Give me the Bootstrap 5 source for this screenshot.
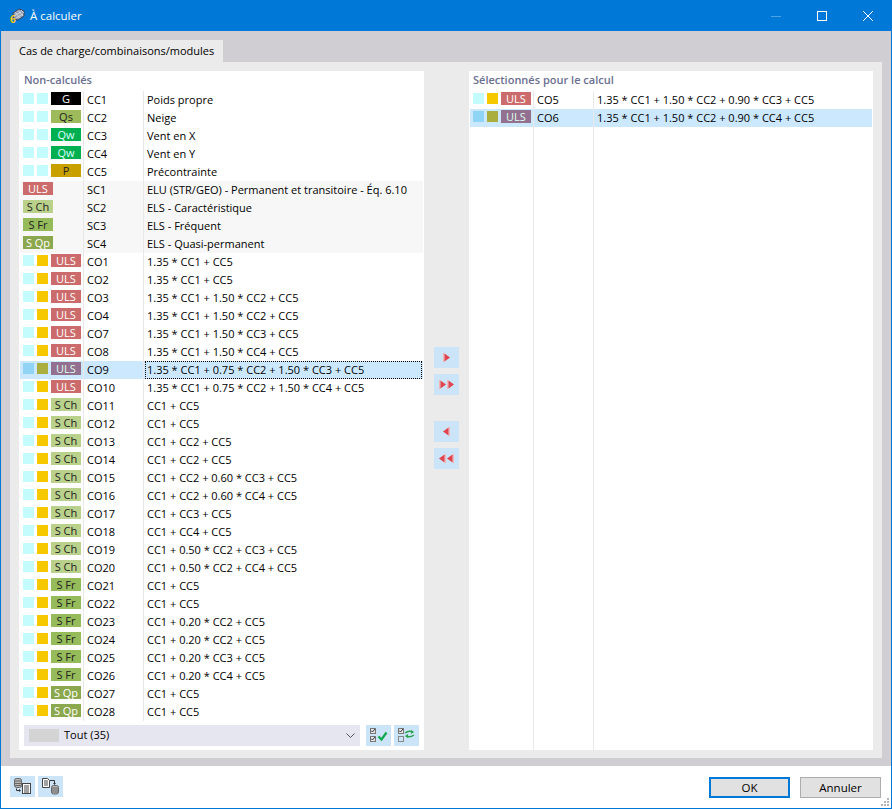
<!doctype html>
<html lang="fr">
  <head>
    <meta charset="UTF-8" />
    <title>À calculer</title>
    <link rel="stylesheet" href="https://cdn.jsdelivr.net/npm/bootstrap@5.3.3/dist/css/bootstrap.min.css" />
    <style>
      html, body { height: 809px; overflow: hidden; }
      body { font-family: "Open Sans", "Noto Sans", sans-serif; font-size: 11px; color: #000; background: #fff; }
      .fenetre { width: 892px; height: 809px; border: 1px solid #0078d7; border-top: 0; }
      .titre { height: 31px; background: #0078d7; color: #fff; font-size: 11.5px; padding-left: 8px; }
      .titre span { margin-left: 5px; }
      .titre-ico { overflow: visible; }
      .ctrl { width: 46px; height: 31px; }
      .milieu { height: 735px; background: #d0ced3; padding: 9px 9px 8px 9px; }
      .onglet { width: 213px; height: 22px; background: #ebebeb; padding: 3px 9px; white-space: nowrap; }
      .panneau { height: 696px; background: #ebebeb; padding: 9px; }
      .volet { width: 405px; height: 679px; background: #fff; }
      .volet-droit { width: 404px; }
      .entete { height: 20px; padding: 1px 0 0 5px; font-weight: 600; color: #6b7090; }
      .volet-droit .entete { padding-left: 4px; }
      .ligne { height: 18px; line-height: 18px; white-space: nowrap; margin: 0 1px; }
      .ligne.gris { background: #f7f7f7; }
      .ligne.sel { background: #cce8ff; }
      .c-icones { width: 64px; flex: none; padding: 1px 0 0 3px; gap: 3px; border-right: 1px solid #e8e8e8; height: 18px; }
      .c-nom { width: 60px; flex: none; padding-left: 3px; border-right: 1px solid #e8e8e8; height: 18px; }
      .c-texte { padding-left: 3px; flex: 1; height: 18px; }
      .focus-cell { outline: 1px dotted #000; outline-offset: -1px; margin-left: 1px; padding-left: 2px; margin-right: 1px; }
      .carre { width: 11px; height: 11px; margin-top: 1px; background: #c4fbfc; }
      .carre.jaune { background: #f5c800; }
      .sel .carre { background: #90d4f5; }
      .sel .carre.jaune { background: #aaae3e; }
      .etiq { width: 30px; height: 13px; line-height: 13px; text-align: center; font-size: 11px; }
      .etiq.G { background: #000; color: #fff; }
      .etiq.Qs { background: #9dbb5a; color: #222; }
      .etiq.Qw { background: #00b050; color: #dff; }
      .etiq.P { background: #c8a000; color: #222; }
      .etiq.ULS { background: #cc6b6b; color: #fff; }
      .etiq.Ch { background: #b9d18a; color: #222; }
      .etiq.Fr { background: #96bb5b; color: #222; }
      .etiq.Qp { background: #8ca84e; color: #fff; }
      .sel .etiq.ULS { background: #93708f; color: #dfe; }
      .liste { height: 634px; }
      .pied-liste { padding: 0 5px; gap: 3px; }
      .combo { width: 336px; height: 21px; background: #e6e6f0; padding: 0 5px; margin-right: 3px; }
      .combo-teinte { width: 30px; height: 13px; background: #d4d4d4; margin-right: 5px; }
      .bt-ico { width: 25px; height: 21px; background: #cce4f7; border: 0; padding: 0; }
      .bt-ico svg { display: block; }
      .col-fleches { width: 45px; padding-top: 276px; gap: 6px; }
      .bt-ecart { margin-top: 20px; }
      .colonne-droite { height: 659px; }
      .reste { flex: 1; margin: 0 1px; }
      .reste .c-icones, .reste .c-nom { height: 100%; }
      .bas { height: 42px; padding: 10px 10px 0 9px; gap: 3px; }
      .bt-dlg { width: 81px; height: 21px; margin-top: 1px; background: #e1e1e1; border: 1px solid #adadad; font-size: 11.5px; padding: 0; line-height: 17px; }
      .bt-dlg.defaut { border: 2px solid #0078d7; margin-right: 7px; }
      .poignee { bottom: 1px; right: 1px; }
    </style>
  </head>
  <body>
    <div class="fenetre d-flex flex-column">
      <div class="titre d-flex align-items-center">
        <svg class="titre-ico" width="16" height="16" viewBox="0 0 16 16">
          <path d="M4 5 L10 1 L15 3 L15 8 L9 12 L5 11Z" fill="#98a2b5" stroke="#39435a"/>
          <path d="M6 4 L11 10 M9 2.500 L14 8 M12 2 L15 5 M5 8 L12 4 M7 10 L14 6" stroke="#dfe5ee" stroke-width=".7"/>
          <text x="1" y="14.500" font-size="10" font-weight="700" fill="#f5c518">6</text>
        </svg>
        <span class="flex-grow-1">À calculer</span>
        <div class="ctrl d-flex align-items-center justify-content-center"><svg width="10" height="10"><path d="M0 5.500H10" stroke="#4fa3e3"/></svg></div>
        <div class="ctrl d-flex align-items-center justify-content-center"><svg width="10" height="10"><rect x=".5" y=".5" width="9" height="9" fill="none" stroke="#fff"/></svg></div>
        <div class="ctrl d-flex align-items-center justify-content-center"><svg width="10" height="10"><path d="M0 0L10 10M10 0L0 10" stroke="#fff"/></svg></div>
      </div>
      <div class="milieu">
        <div class="onglet">Cas de charge/combinaisons/modules</div>
        <div class="panneau d-flex">
          <div class="volet">
            <div class="entete">Non-calculés</div>
            <div class="liste" id="gauche"></div>
            <div class="pied-liste d-flex">
              <div class="combo d-flex align-items-center">
                <div class="combo-teinte"></div>
                <div class="flex-grow-1">Tout (35)</div>
                <svg width="9" height="5"><path d="M.5 .5L4.500 4.500L8.500 .5" fill="none" stroke="#555"/></svg>
              </div>
              <button class="bt-ico"><svg width="25" height="21"><rect x="4.500" y="3.500" width="5" height="5" fill="#e8e8e8" stroke="#777"/><rect x="4.500" y="11.500" width="5" height="5" fill="#e8e8e8" stroke="#777"/><path d="M5 5.500l1.500 1.500l2.500-3M5 13.500l1.500 1.500l2.500-3" fill="none" stroke="#333"/><path d="M12.500 11.500l3 3l5-7" fill="none" stroke="#0fa84a" stroke-width="2.200"/></svg></button>
              <button class="bt-ico"><svg width="25" height="21"><rect x="4.500" y="3.500" width="5" height="5" fill="#e8e8e8" stroke="#777"/><rect x="4.500" y="11.500" width="5" height="5" fill="none" stroke="#888"/><path d="M5 5.500l1.500 1.500l2.500-3" fill="none" stroke="#333"/><path d="M11 8q4-3 8-1M20 10q-4 3-8 1" fill="none" stroke="#2aa24f" stroke-width="1.500"/><path d="M17 5l3 2l-3 2zM14 9l-3 2l3 2z" fill="#2aa24f"/></svg></button>
            </div>
          </div>
          <div class="col-fleches d-flex flex-column align-items-center" id="fleches"></div>
          <div class="volet volet-droit">
            <div class="entete">Sélectionnés pour le calcul</div>
            <div id="droite" class="colonne-droite d-flex flex-column"></div>
          </div>
        </div>
      </div>
      <div class="bas d-flex position-relative">
        <button class="bt-ico"><svg width="25" height="21"><rect x="4.500" y="2.500" width="7" height="9" rx="2" fill="#b5b5b5" stroke="#666"/><path d="M5 5h6M5 7.500h6M5 9.500h6" stroke="#666"/><path d="M6.500 12.500v2h3.500" fill="none" stroke="#333"/><path d="M9 13l2 1.500l-2 1.500z" fill="#333"/><rect x="12.500" y="7.500" width="8" height="10" fill="#fff" stroke="#444"/><path d="M14 10h5M14 12h5M14 14h5M14 16h5" stroke="#444"/></svg></button>
        <button class="bt-ico"><svg width="25" height="21"><path d="M4.500 2.500h5l2 2v7h-7z" fill="#fff" stroke="#444"/><path d="M6 5h4M6 7h4M6 9h4" stroke="#444"/><path d="M12 4.500h4.500v3" fill="none" stroke="#333"/><path d="M15 7l1.500 2l1.500-2z" fill="#333"/><rect x="13.500" y="9.500" width="7" height="8.500" rx="2" fill="#b5b5b5" stroke="#666"/><path d="M14 12h6M14 14h6M14 16h6" stroke="#666"/></svg></button>
        <div class="flex-grow-1"></div>
        <button class="bt-dlg defaut">OK</button>
        <button class="bt-dlg">Annuler</button>
        <svg class="poignee position-absolute" width="10" height="10"><path d="M7 1h2v2H7zM4 4h2v2H4zM7 4h2v2H7zM1 7h2v2H1zM4 7h2v2H4zM7 7h2v2H7z" fill="#b5b5b5"/></svg>
      </div>
    </div>
    <script>
      // [genre de ligne, type etiquette, texte etiquette, nom, description]
      const cas = [
        ['c', 'G', 'G', 'CC1', 'Poids propre'], ['c', 'Qs', 'Qs', 'CC2', 'Neige'], ['c', 'Qw', 'Qw', 'CC3', 'Vent en X'],
        ['c', 'Qw', 'Qw', 'CC4', 'Vent en Y'], ['c', 'P', 'P', 'CC5', 'Précontrainte'],
        ['s', 'ULS', 'ULS', 'SC1', 'ELU (STR/GEO) - Permanent et transitoire - Éq. 6.10'], ['s', 'Ch', 'S Ch', 'SC2', 'ELS - Caractéristique'],
        ['s', 'Fr', 'S Fr', 'SC3', 'ELS - Fréquent'], ['s', 'Qp', 'S Qp', 'SC4', 'ELS - Quasi-permanent'],
        ['o', 'ULS', 'ULS', 'CO1', '1.35 * CC1 + CC5'], ['o', 'ULS', 'ULS', 'CO2', '1.35 * CC1 + CC5'],
        ['o', 'ULS', 'ULS', 'CO3', '1.35 * CC1 + 1.50 * CC2 + CC5'], ['o', 'ULS', 'ULS', 'CO4', '1.35 * CC1 + 1.50 * CC2 + CC5'],
        ['o', 'ULS', 'ULS', 'CO7', '1.35 * CC1 + 1.50 * CC3 + CC5'], ['o', 'ULS', 'ULS', 'CO8', '1.35 * CC1 + 1.50 * CC4 + CC5'],
        ['x', 'ULS', 'ULS', 'CO9', '1.35 * CC1 + 0.75 * CC2 + 1.50 * CC3 + CC5'], ['o', 'ULS', 'ULS', 'CO10', '1.35 * CC1 + 0.75 * CC2 + 1.50 * CC4 + CC5'],
        ['o', 'Ch', 'S Ch', 'CO11', 'CC1 + CC5'], ['o', 'Ch', 'S Ch', 'CO12', 'CC1 + CC5'], ['o', 'Ch', 'S Ch', 'CO13', 'CC1 + CC2 + CC5'],
        ['o', 'Ch', 'S Ch', 'CO14', 'CC1 + CC2 + CC5'], ['o', 'Ch', 'S Ch', 'CO15', 'CC1 + CC2 + 0.60 * CC3 + CC5'],
        ['o', 'Ch', 'S Ch', 'CO16', 'CC1 + CC2 + 0.60 * CC4 + CC5'], ['o', 'Ch', 'S Ch', 'CO17', 'CC1 + CC3 + CC5'],
        ['o', 'Ch', 'S Ch', 'CO18', 'CC1 + CC4 + CC5'], ['o', 'Ch', 'S Ch', 'CO19', 'CC1 + 0.50 * CC2 + CC3 + CC5'],
        ['o', 'Ch', 'S Ch', 'CO20', 'CC1 + 0.50 * CC2 + CC4 + CC5'], ['o', 'Fr', 'S Fr', 'CO21', 'CC1 + CC5'], ['o', 'Fr', 'S Fr', 'CO22', 'CC1 + CC5'],
        ['o', 'Fr', 'S Fr', 'CO23', 'CC1 + 0.20 * CC2 + CC5'], ['o', 'Fr', 'S Fr', 'CO24', 'CC1 + 0.20 * CC2 + CC5'],
        ['o', 'Fr', 'S Fr', 'CO25', 'CC1 + 0.20 * CC3 + CC5'], ['o', 'Fr', 'S Fr', 'CO26', 'CC1 + 0.20 * CC4 + CC5'],
        ['o', 'Qp', 'S Qp', 'CO27', 'CC1 + CC5'], ['o', 'Qp', 'S Qp', 'CO28', 'CC1 + CC5']
      ];
      const choisis = [
        ['o', 'ULS', 'ULS', 'CO5', '1.35 * CC1 + 1.50 * CC2 + 0.90 * CC3 + CC5'],
        ['y', 'ULS', 'ULS', 'CO6', '1.35 * CC1 + 1.50 * CC2 + 0.90 * CC4 + CC5']
      ];

      function ligneHtml([genre, type, txt, nom, desc]) {
        let icones = `<div class="carre"></div>`;
        if (genre === 'c') icones += `<div class="carre"></div>`;
        if (genre === 'o' || genre === 'x' || genre === 'y') icones += `<div class="carre jaune"></div>`;
        if (genre === 's') icones = '';
        const classe = genre === 's' ? 'gris' : (genre === 'x' || genre === 'y') ? 'sel' : '';
        return `<div class="ligne d-flex ${classe}">
          <div class="c-icones d-flex">${icones}<div class="etiq ${type}">${txt}</div></div>
          <div class="c-nom">${nom}</div>
          <div class="c-texte ${genre === 'x' ? 'focus-cell' : ''}">${desc}</div>
        </div>`;
      }

      document.getElementById('gauche').innerHTML = cas.map(ligneHtml).join('');
      // les separateurs de colonnes descendent jusqu'en bas a droite
      document.getElementById('droite').innerHTML = choisis.map(ligneHtml).join('') +
        `<div class="reste d-flex"><div class="c-icones"></div><div class="c-nom"></div></div>`;

      const dte = x => `<path d="M${x} 6h1.500v9H${x}z" fill="#f5b5b8"/><path d="M${x + 1.5} 6.500v8l5.500-4z" fill="#e0454f"/>`;
      const gch = x => `<path d="M${x - 1.5} 6h1.500v9h-1.500z" fill="#f5b5b8"/><path d="M${x - 1.5} 6.500v8l-5.500-4z" fill="#e0454f"/>`;
      const boutons = [dte(9), dte(5) + dte(13), gch(16), gch(12) + gch(20)];
      document.getElementById('fleches').innerHTML = boutons.map((b, i) =>
        `<button class="bt-ico ${i === 2 ? 'bt-ecart' : ''}"><svg width="25" height="21">${b}</svg></button>`
      ).join('');
    </script>
    <script src="https://cdn.jsdelivr.net/npm/bootstrap@5.3.3/dist/js/bootstrap.bundle.min.js"></script>
  </body>
</html>
